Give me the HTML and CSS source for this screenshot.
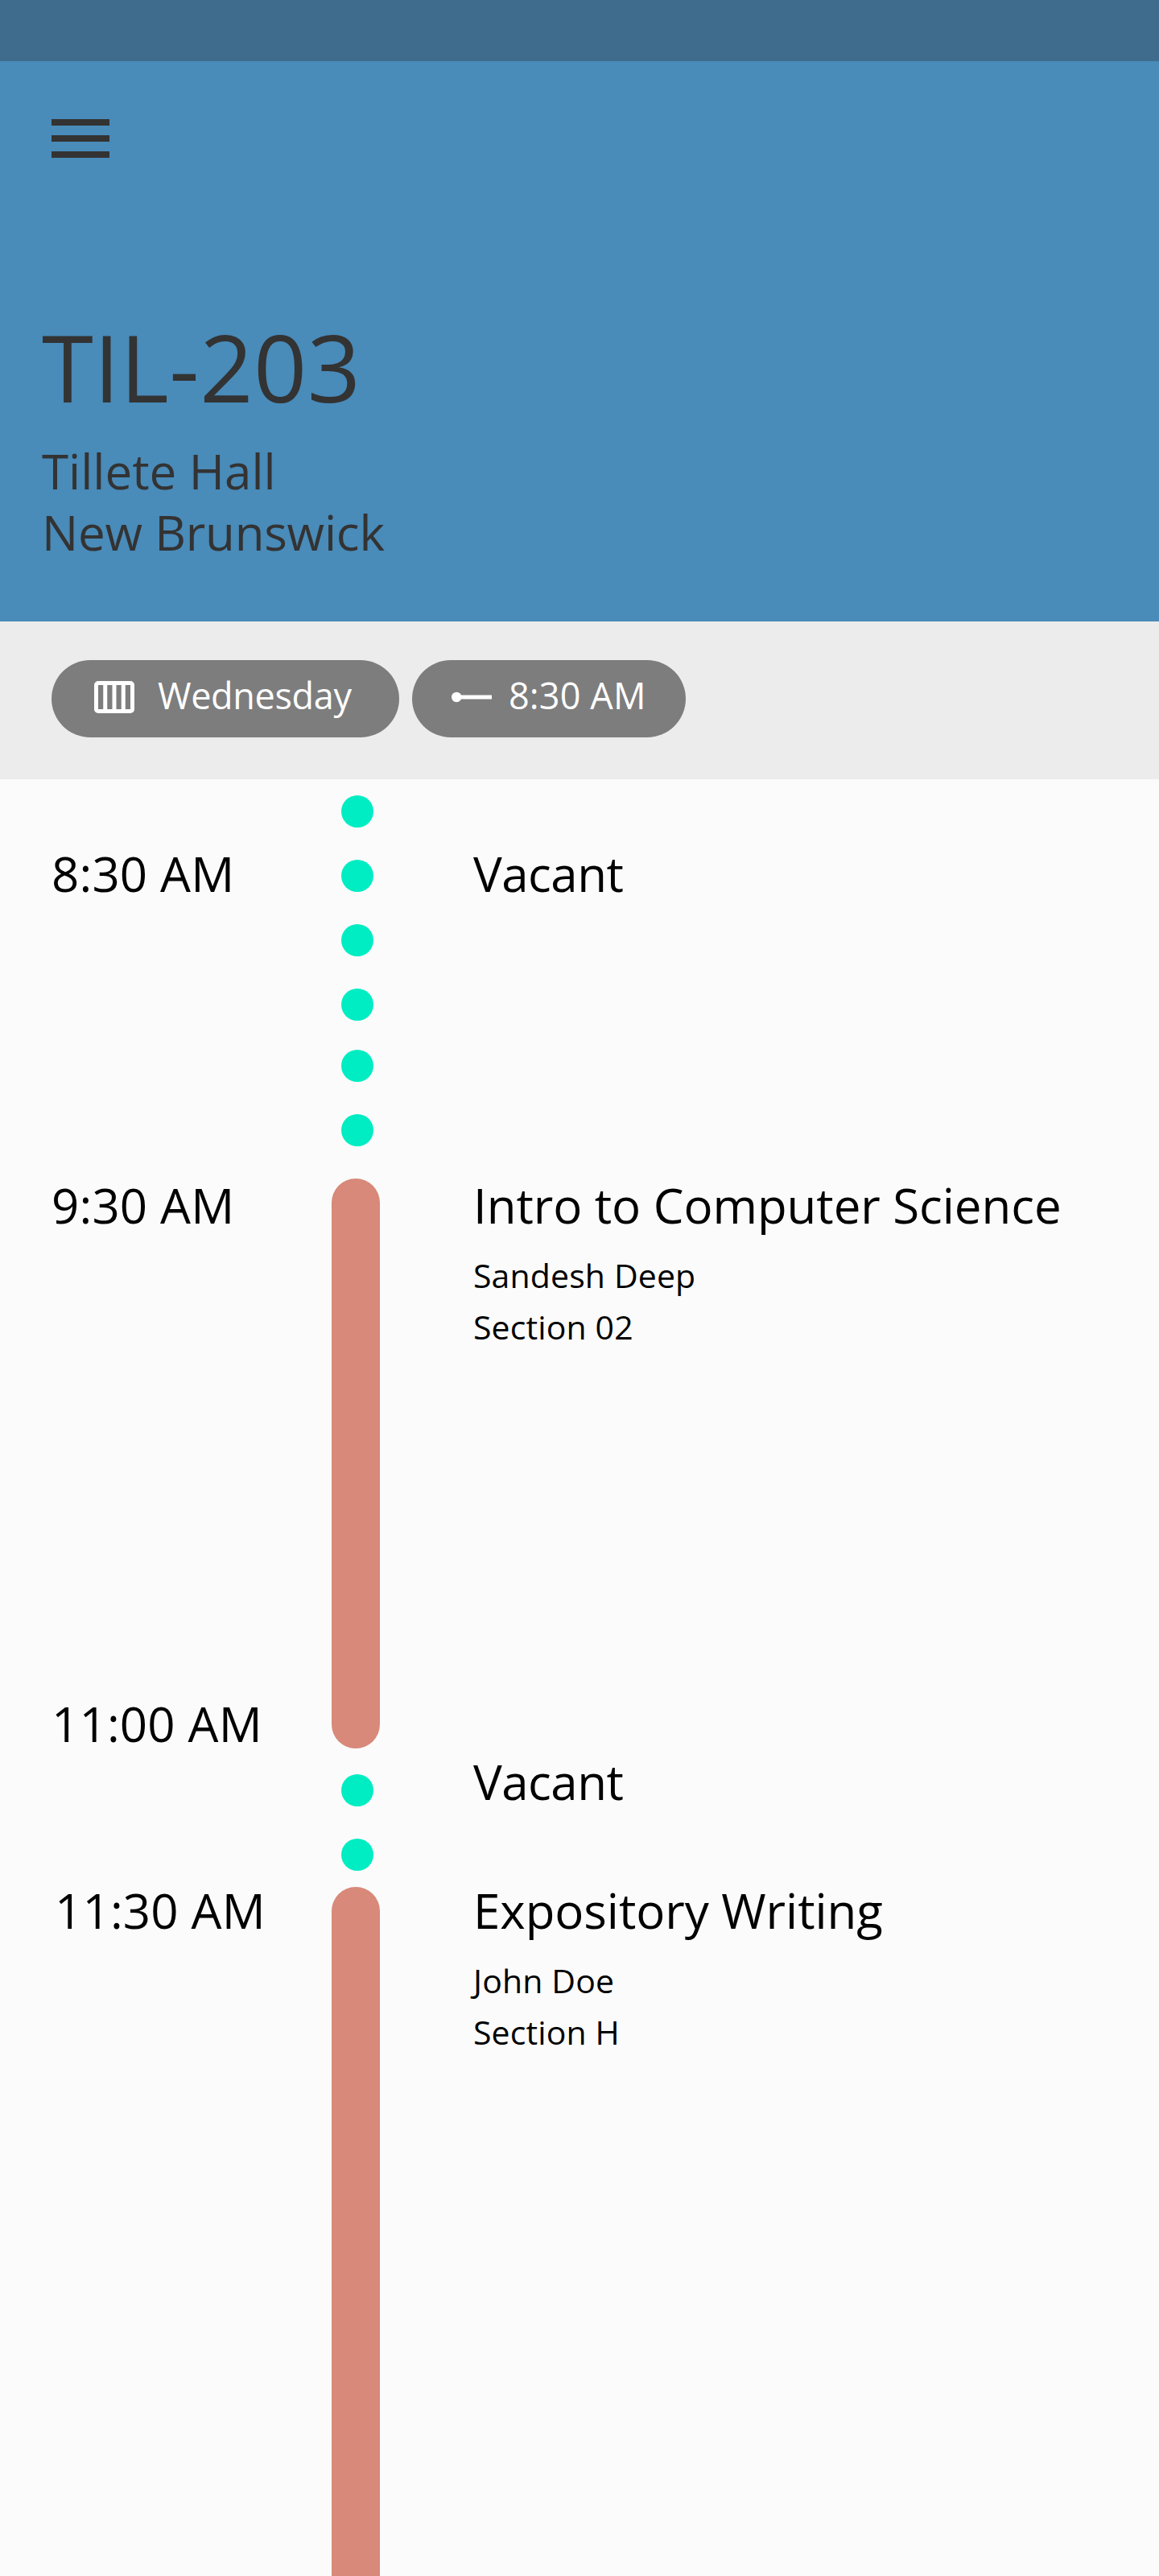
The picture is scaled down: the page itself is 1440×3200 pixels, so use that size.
FILE: index.html
```html
<!DOCTYPE html>
<html lang="en">
<head>
<meta charset="utf-8">
<title>TIL-203</title>
<link rel="stylesheet" href="styles.css">
</head>
<body>
<div class="status-bar"></div>
<header class="header">
  <svg class="menu" viewBox="0 0 72 48" fill="currentColor"><path d="M0 0h72v8H0zM0 20h72v8H0zM0 40h72v8H0z"/></svg>
  <h1 class="room">TIL-203</h1>
  <p class="place">Tillete Hall</p>
  <p class="campus">New Brunswick</p>
</header>
<nav class="filters">
  <div class="chip chip-day">
    <svg class="chip-icon-day" viewBox="0 0 50 40" fill="currentColor"><path fill-rule="evenodd" d="M5 0h40a5 5 0 0 1 5 5v30a5 5 0 0 1-5 5H5a5 5 0 0 1-5-5V5a5 5 0 0 1 5-5zM5 5v30h6.25V5zM16.25 5v30h6.25V5zM27.5 5v30h6.25V5zM38.75 5v30H45V5z"/></svg>
    <span class="chip-label">Wednesday</span>
  </div>
  <div class="chip chip-time">
    <svg class="chip-icon-time" viewBox="0 0 50 14" fill="currentColor"><circle cx="6.25" cy="7" r="6.25"/><path d="M6 4.5h44v5H6z"/></svg>
    <span class="chip-label">8:30 AM</span>
  </div>
</nav>
<main class="timeline">
  <section class="slot slot-first">
    <div class="times"><span>8:30 AM</span></div>
    <div class="track track-free">
      <div class="dots"><i class="dot"></i><i class="dot"></i><i class="dot"></i><i class="dot"></i></div>
      <div class="dots"><i class="dot"></i><i class="dot"></i></div>
    </div>
    <div class="details"><h2 class="name vacant">Vacant</h2></div>
  </section>
  <section class="slot slot-class">
    <div class="times"><span>9:30 AM</span><span>11:00 AM</span></div>
    <div class="track"><div class="bar"></div></div>
    <div class="details">
      <h2 class="name">Intro to Computer Science</h2>
      <p class="info">Sandesh Deep<br>Section 02</p>
    </div>
  </section>
  <section class="slot slot-gap">
    <div class="times"></div>
    <div class="track track-free">
      <div class="dots"><i class="dot"></i><i class="dot"></i></div>
    </div>
    <div class="details"><h2 class="name vacant">Vacant</h2></div>
  </section>
  <section class="slot slot-last">
    <div class="times"><span>11:30 AM</span></div>
    <div class="track"><div class="bar bar-open"></div></div>
    <div class="details">
      <h2 class="name">Expository Writing</h2>
      <p class="info">John Doe<br>Section H</p>
    </div>
  </section>
</main>
</body>
</html>
```
FILE: styles.css
```css
* { box-sizing: border-box; margin: 0; padding: 0; }

body {
  width: 1440px;
  height: 3200px;
  overflow: hidden;
  display: flex;
  flex-direction: column;
  background: #fbfbfb;
  color: #000;
  font-family: "Open Sans", "Noto Sans", sans-serif;
}

h1, h2 { font-weight: 400; }
svg { display: block; flex: none; }

.status-bar { height: 76px; flex: none; background: #3f6c8d; }

.header {
  height: 696px;
  flex: none;
  padding: 72px 52px 0;
  background: #498bb9;
  color: #333;
}
.menu { width: 72px; height: 48px; margin-left: 12px; }
.room { margin-top: 199px; font-size: 116px; line-height: 120px; letter-spacing: 0.5px; }
.place { margin-top: 32px; font-size: 60px; line-height: 76px; }
.campus { font-size: 60px; line-height: 76px; letter-spacing: -0.2px; }

.filters {
  height: 196px;
  flex: none;
  display: flex;
  gap: 16px;
  padding: 48px 64px 0;
  background: #ececec;
}
.chip {
  height: 96px;
  display: flex;
  align-items: center;
  border-radius: 48px;
  padding-bottom: 4px;
  background: #7d7d7d;
  color: #fff;
  font-size: 45px;
  line-height: 60px;
  white-space: nowrap;
}
.chip-label { padding-bottom: 5px; }
.chip-day { width: 432px; padding-left: 53px; gap: 29px; letter-spacing: -0.35px; }
.chip-time { width: 340px; padding-left: 49px; gap: 21px; letter-spacing: 0.13px; }
.chip-icon-day { width: 50px; height: 40px; }
.chip-icon-time { width: 50px; height: 14px; }

.timeline { flex: 1; display: flex; flex-direction: column; }
.slot {
  flex: none;
  display: grid;
  grid-template-columns: 348px 60px 1fr;
  padding-left: 64px;
}
.slot-first { height: 496px; }
.slot-class { height: 708px; }
.slot-gap { height: 172px; }
.slot-last { height: 856px; }

.times {
  display: flex;
  flex-direction: column;
  justify-content: space-between;
  font-size: 60px;
  line-height: 58px;
  letter-spacing: 0.16px;
}
.details { padding-left: 116px; }
.name { font-size: 60px; line-height: 58px; letter-spacing: -0.06px; white-space: nowrap; }
.vacant { letter-spacing: -0.5px; }
.info { margin-top: 26px; font-size: 41px; line-height: 64px; letter-spacing: 0.13px; }

.slot-first .times, .slot-first .details { padding-top: 88px; }
.slot-class .times { padding: 4px 0 2px; }
.slot-class .details { padding-top: 4px; }
.slot-gap .details { padding-top: 12px; }
.slot-last .times { padding-left: 4px; }

.track { display: flex; flex-direction: column; }
.track-free { padding-left: 12px; gap: 36px; }
.slot-first .track-free { padding-top: 20px; }
.slot-gap .track-free { padding-top: 32px; }
.dots { display: flex; flex-direction: column; gap: 40px; }
.dot { width: 40px; height: 40px; border-radius: 50%; background: #00edc3; }
.bar { flex: 1; border-radius: 30px; background: #d88979; }
.bar-open { border-radius: 30px 30px 0 0; }
```
